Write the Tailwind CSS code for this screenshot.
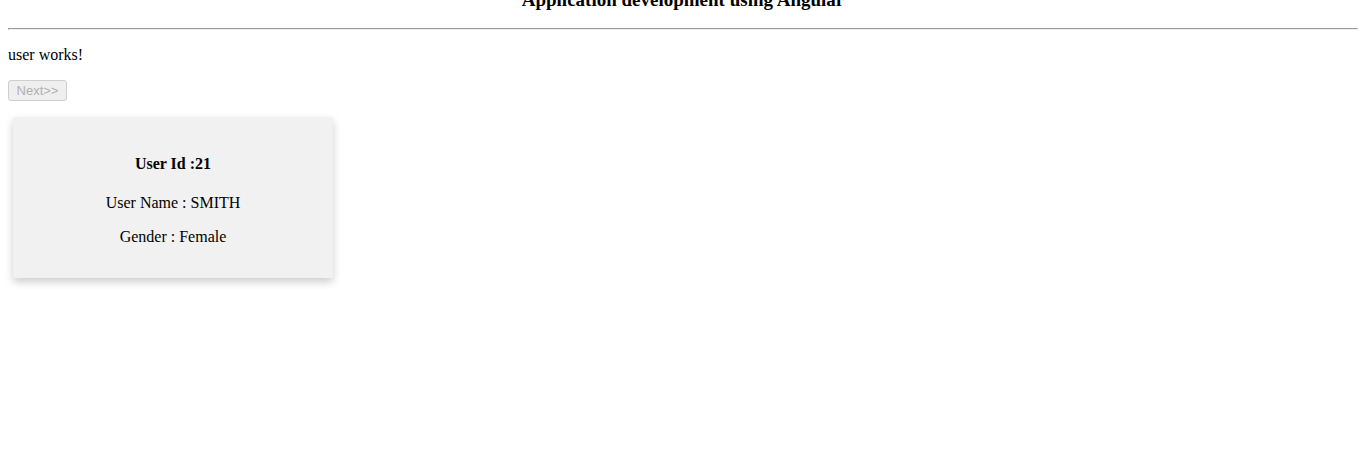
<!DOCTYPE html>
<html lang="en">
<head>
<meta charset="utf-8">
<title>User</title>
<script src="https://cdn.jsdelivr.net/npm/@tailwindcss/browser@4"></script>
</head>
<body class="bg-white px-2 pb-4 font-['Liberation_Serif','Times_New_Roman',serif] text-base/[18px] text-black">
<header class="-mt-2.5">
<h3 class="text-center text-[19px]/[20px] font-bold">Application development using Angular</h3>
</header>
<hr class="mt-[18px] h-0.5 border border-[#9a9a9a] border-r-[#eeeeee] border-b-[#eeeeee]">
<main>
<p class="mt-4">user works!</p>
<button type="button" disabled class="mt-4 block h-[21px] min-w-[59px] rounded-[3px] border border-[#cecece] bg-[#efefef] px-1.5 font-['Liberation_Sans',Arial,sans-serif] text-[13px]/[15px] text-[#b0b0b0]">Next&gt;&gt;</button>
<section class="mx-[5px] mt-4 w-80 rounded-xs bg-[#f1f1f1] px-4 pt-[38px] pb-8 text-center shadow-[0_4px_8px_0_rgba(0,0,0,0.2)]">
<h4 class="font-bold">User Id :21</h4>
<p class="mt-[21px]">User Name : SMITH</p>
<p class="mt-4">Gender : Female</p>
</section>
</main>
</body>
</html>
